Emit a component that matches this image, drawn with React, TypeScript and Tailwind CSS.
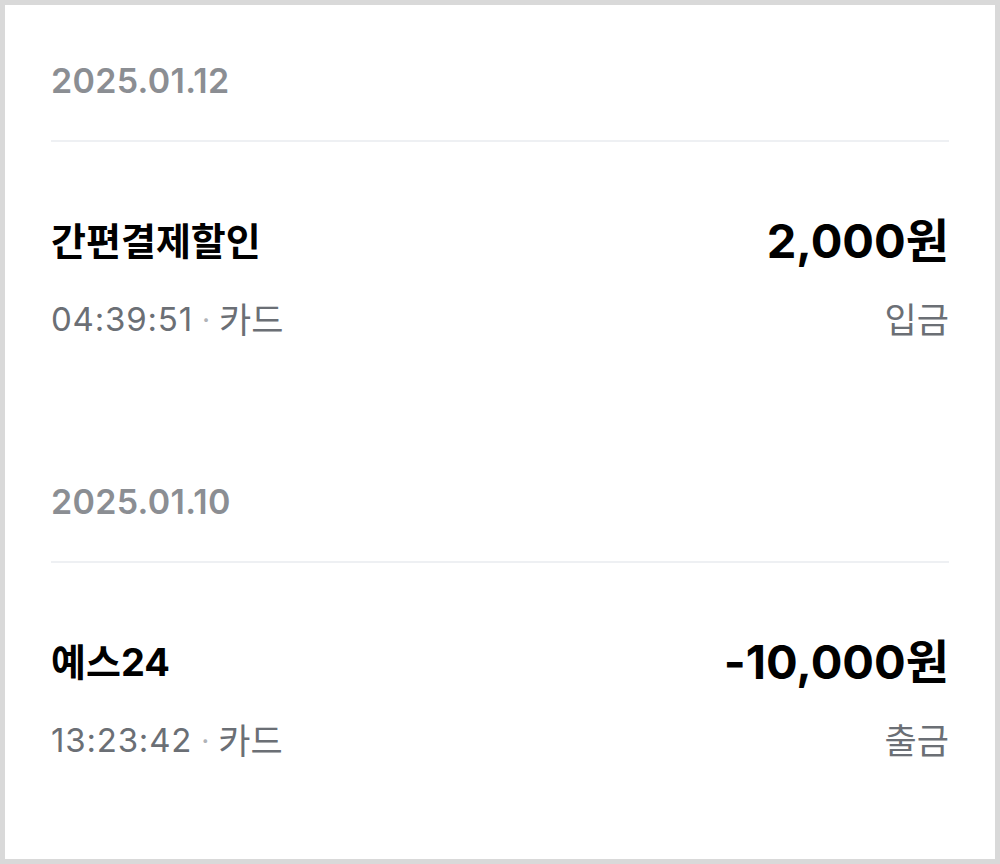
import React from "react";

const font = { fontFamily: 'Inter, "Noto Sans CJK KR", sans-serif' };

type Tx = { date: string; title: string; amount: string; time: string; method: string; kind: string };

const data: Tx[] = [
  { date: "2025.01.12", title: "간편결제할인", amount: "2,000원", time: "04:39:51", method: "카드", kind: "입금" },
  { date: "2025.01.10", title: "예스24", amount: "-10,000원", time: "13:23:42", method: "카드", kind: "출금" },
];

export default function App() {
  return (
    <div className="w-[1000px] h-[864px] bg-[#d9d9d9] p-[5px]" style={font}>
      <div className="h-full bg-white px-[46px] pt-[58px] flex flex-col gap-[144px]">
        {data.map((t) => (
          <section key={t.date} className="flex flex-col">
            <div className="h-[36px] leading-[36px] text-[34px] tracking-[0.3px] font-semibold text-[#8b8e93]">{t.date}</div>
            <div className="mt-[41px] h-[2px] bg-[#eef0f3]" />
            <div className="mt-[71px] h-[56px] flex items-center justify-between">
              <span className="text-[38px] font-bold text-black">{t.title}</span>
              <span className="text-[47px] font-bold text-black">{t.amount}</span>
            </div>
            <div className="mt-[31px] h-[40px] flex items-center justify-between text-[33px] text-[#6b6f75]">
              <span className="flex items-center">
                <span className="tracking-[0.8px]">{t.time}</span>
                <span className="mx-[9px] text-[#b0b3b8] text-[28px]">·</span>
                <span className="text-[35px]">{t.method}</span>
              </span>
              <span className="text-[35px]">{t.kind}</span>
            </div>
          </section>
        ))}
      </div>
    </div>
  );
}
